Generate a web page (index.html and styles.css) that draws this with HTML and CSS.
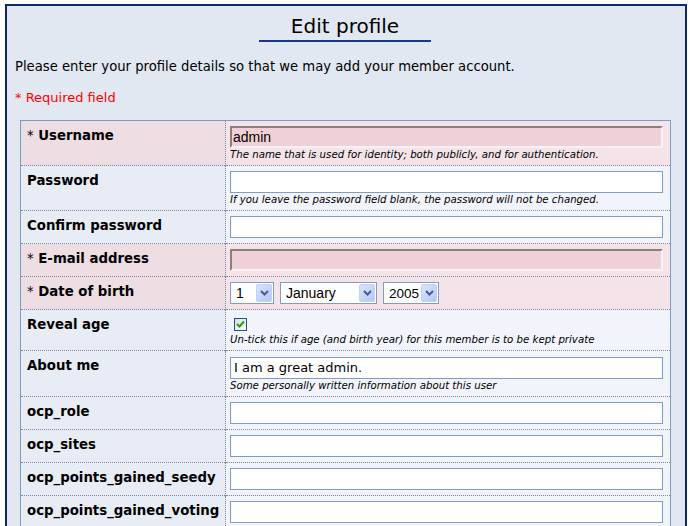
FILE: index.html
```html
<!DOCTYPE html>
<html>
<head>
<meta charset="utf-8">
<title>Edit profile</title>
<link rel="stylesheet" href="styles.css">
</head>
<body>
<div class="page">
  <h1 class="title">Edit profile</h1>
  <p class="intro">Please enter your profile details so that we may add your member account.</p>
  <p class="required-note">* Required field</p>
  <table class="form">
    <tr class="req">
      <th><span class="star">*</span> Username</th>
      <td><div class="input sunk">admin</div><div class="desc">The name that is used for identity; both publicly, and for authentication.</div></td>
    </tr>
    <tr>
      <th>Password</th>
      <td><div class="input"></div><div class="desc">If you leave the password field blank, the password will not be changed.</div></td>
    </tr>
    <tr>
      <th>Confirm password</th>
      <td><div class="input"></div></td>
    </tr>
    <tr class="req">
      <th><span class="star">*</span> E-mail address</th>
      <td><div class="input sunk"></div></td>
    </tr>
    <tr class="req">
      <th><span class="star">*</span> Date of birth</th>
      <td>
        <div class="selects">
          <div class="select s-day"><span>1</span><span class="btn"><svg width="9" height="6" viewBox="0 0 9 6"><path d="M1 1 L4.5 4.5 L8 1" fill="none" stroke="#4a5d86" stroke-width="2"/></svg></span></div>
          <div class="select s-month"><span>January</span><span class="btn"><svg width="9" height="6" viewBox="0 0 9 6"><path d="M1 1 L4.5 4.5 L8 1" fill="none" stroke="#4a5d86" stroke-width="2"/></svg></span></div>
          <div class="select s-year"><span>2005</span><span class="btn"><svg width="9" height="6" viewBox="0 0 9 6"><path d="M1 1 L4.5 4.5 L8 1" fill="none" stroke="#4a5d86" stroke-width="2"/></svg></span></div>
        </div>
      </td>
    </tr>
    <tr>
      <th>Reveal age</th>
      <td>
        <div class="check-line"><span class="checkbox"><svg width="11" height="11" viewBox="0 0 11 11"><path d="M2 5 L4.5 7.5 L9 2.5" fill="none" stroke="#21a121" stroke-width="2"/></svg></span></div>
        <div class="desc">Un-tick this if age (and birth year) for this member is to be kept private</div>
      </td>
    </tr>
    <tr>
      <th>About me</th>
      <td><div class="input verd">I am a great admin.</div><div class="desc">Some personally written information about this user</div></td>
    </tr>
    <tr>
      <th>ocp_role</th>
      <td><div class="input"></div></td>
    </tr>
    <tr>
      <th>ocp_sites</th>
      <td><div class="input"></div></td>
    </tr>
    <tr>
      <th>ocp_points_gained_seedy</th>
      <td><div class="input"></div></td>
    </tr>
    <tr>
      <th>ocp_points_gained_voting</th>
      <td><div class="input"></div></td>
    </tr>
  </table>
</div>
</body>
</html>
```
FILE: styles.css
```css
html, body {
  margin: 0;
  padding: 0;
  background: #ffffff;
}
body {
  font-family: "DejaVu Sans", Verdana, sans-serif;
  color: #000;
}
.page {
  margin: 4px 4px 0 5px;
  border: 2px solid #0f2a6b;
  border-bottom: none;
  background: #e1e8f1;
  height: 540px;
  box-sizing: border-box;
  padding: 0 15px 0 13px;
}
.title {
  margin: 0 auto;
  width: 172px;
  text-align: center;
  font-size: 20px;
  font-weight: normal;
  line-height: 24px;
  padding-top: 8px;
  padding-bottom: 2px;
  border-bottom: 2px solid #163c7c;
}
.intro {
  margin: 17px 0 0 -5px;
  font-size: 13.2px;
  line-height: 16px;
}
.required-note {
  margin: 15px 0 0 -5px;
  font-size: 13px;
  line-height: 16px;
  color: #ff0000;
}
.form {
  margin-top: 14px;
  width: 651px;
  border-collapse: collapse;
  border: 1px solid #7f9cc0;
  border-bottom: none;
}
.form th,
.form td {
  border-top: 1px dotted #7d86a6;
  vertical-align: top;
  padding: 0;
}
.form th {
  width: 198px;
  text-align: left;
  font-size: 13.3px;
  line-height: 16px;
  font-weight: bold;
  padding: 7px 0 0 6px;
  background: #e8ecf5;
  border-right: 1px dotted #7d86a6;
  white-space: nowrap;
}
.form th .star {
  font-weight: normal;
}
.form td {
  padding: 5px 6px 5px 4px;
  background: #f1f4fa;
}
.form tr.req th {
  background: #eedde3;
}
.form tr.req td {
  background: #f4e3e8;
}
.input {
  box-sizing: border-box;
  height: 22px;
  width: 433px;
  background: #fff;
  border: 1px solid #7f9dc0;
  font-family: "Liberation Sans", Arial, sans-serif;
  font-size: 14px;
  line-height: 20px;
  padding-left: 2px;
}
.input.sunk {
  background: #f0d0d8;
  border-width: 2px;
  border-style: solid;
  border-color: #878178 #faf2f2 #faf2f2 #878178;
  line-height: 18px;
  padding-left: 1px;
}
.input.verd {
  margin: 1px 0;
  font-family: "DejaVu Sans", Verdana, sans-serif;
  font-size: 13px;
  line-height: 20px;
  padding-left: 3px;
}
.desc {
  font-size: 10.2px;
  font-style: italic;
  line-height: 12px;
  margin-top: 1px;
  margin-bottom: -1px;
}
.selects {
  display: flex;
  gap: 6px;
}
.select {
  box-sizing: border-box;
  height: 22px;
  background: #fff;
  border: 1px solid #7f9dc0;
  display: flex;
  align-items: center;
  justify-content: space-between;
  padding: 0 1px 0 5px;
  font-family: "Liberation Sans", Arial, sans-serif;
  font-size: 14px;
}
.s-day { width: 44px; }
.s-month { width: 97px; }
.s-year { width: 56px; padding-left: 5px; font-size: 13.5px; }
.btn {
  box-sizing: border-box;
  width: 16px;
  height: 18px;
  background: linear-gradient(135deg, #d8e3fe, #b3c7f7);
  border: 1px solid #c3d1f5;
  border-radius: 2px;
  display: flex;
  align-items: center;
  justify-content: center;
}
.check-line {
  box-sizing: border-box;
  height: 18px;
  padding-top: 3px;
  padding-left: 4px;
}
.checkbox {
  box-sizing: border-box;
  display: flex;
  align-items: center;
  justify-content: center;
  width: 13px;
  height: 13px;
  border: 1px solid #1c5180;
  background: linear-gradient(135deg, #dcdcd7, #ffffff);
}
```
